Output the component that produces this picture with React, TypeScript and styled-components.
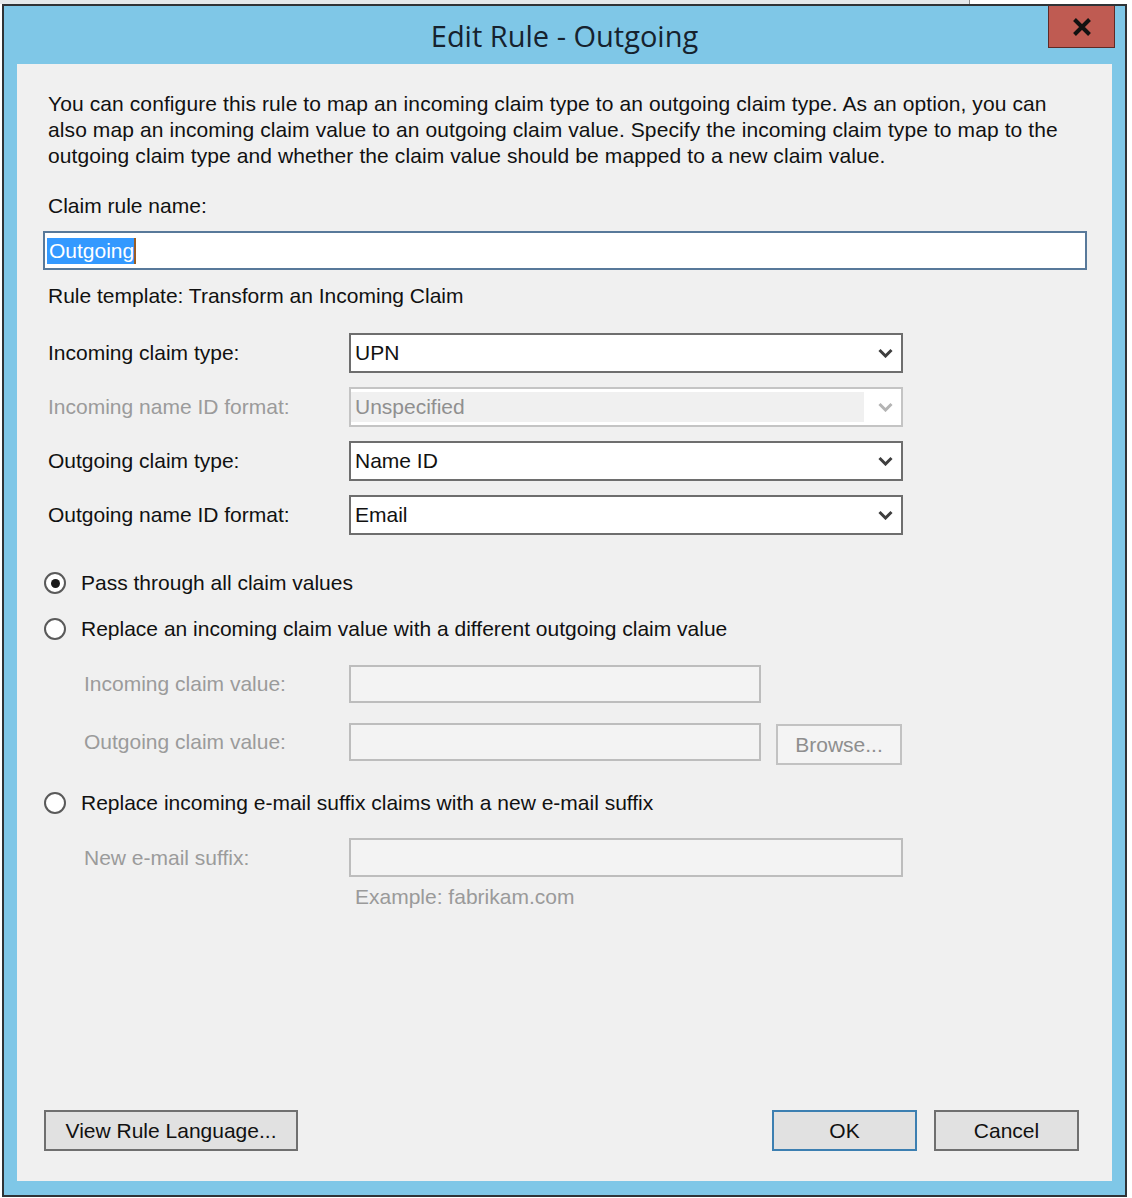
import React from "react";
import styled, { createGlobalStyle } from "styled-components";

const GlobalStyle = createGlobalStyle`
  html, body { margin: 0; padding: 0; background: #ffffff; }
  body { font-family: "Liberation Sans", Arial, sans-serif; }
  * { box-sizing: border-box; }
`;

const Page = styled.div`
  width: 1132px;
  height: 1198px;
  overflow: hidden;
  background: #ffffff;
`;

const BackdropStrip = styled.div`
  width: 970px;
  height: 4px;
  background: #e4e8ea;
  border-right: 1px solid #8a8a8a;
`;

const Window = styled.div`
  margin-left: 2px;
  width: 1125px;
  height: 1193px;
  border: 2px solid #2f3336;
  background: #7fc7e7;
  display: flex;
  flex-direction: column;
`;

const TitleBar = styled.div`
  height: 58px;
  flex: none;
  display: grid;
  grid-template-columns: 1fr auto 1fr;
`;

const Title = styled.div`
  grid-column: 2;
  align-self: center;
  font-family: "Open Sans", "Noto Sans", sans-serif;
  font-size: 29px;
  line-height: 36px;
  color: #16222e;
  padding-top: 1px;
`;

const CloseButton = styled.div`
  grid-column: 3;
  justify-self: end;
  align-self: start;
  margin-right: 10px;
  width: 67px;
  height: 42px;
  background: #bf5b52;
  border: 1px solid #5e2a26;
  border-top: none;
  display: flex;
  align-items: center;
  justify-content: center;
`;

const Panel = styled.div`
  flex: 1;
  margin: 0 13px 14px 13px;
  background: #f0f0f0;
  padding: 27px 25px 30px 27px;
  display: flex;
  flex-direction: column;
  font-size: 21px;
  line-height: 26px;
  color: #111111;
`;

const Description = styled.div`
  margin-left: 4px;
  white-space: nowrap;
  letter-spacing: 0.1px;
`;

const Line = styled.span`
  display: block;
`;

const Label = styled.div<{ $mt: number; $muted?: boolean }>`
  margin-top: ${(p) => p.$mt}px;
  margin-left: 4px;
  white-space: nowrap;
  color: ${(p) => (p.$muted ? "#9b9b9b" : "#111111")};
`;

const NameBox = styled.div`
  margin-top: 12px;
  margin-left: -1px;
  height: 39px;
  border: 2px solid #58799a;
  background: #ffffff;
  display: flex;
  align-items: center;
  padding-left: 2px;
`;

const Selection = styled.span`
  background: #3399ff;
  color: #ffffff;
  height: 26px;
  line-height: 26px;
  padding: 0 0 0 2px;
`;

const Caret = styled.span`
  width: 2px;
  height: 26px;
  background: #9a5c24;
`;

const FieldGrid = styled.div<{ $mt: number; $gap: number }>`
  margin-top: ${(p) => p.$mt}px;
  display: grid;
  grid-template-columns: 305px auto;
  row-gap: ${(p) => p.$gap}px;
  justify-content: start;
`;

const GridLabel = styled.div<{ $indent: number; $muted?: boolean }>`
  padding-left: ${(p) => p.$indent}px;
  align-self: center;
  white-space: nowrap;
  color: ${(p) => (p.$muted ? "#9b9b9b" : "#111111")};
`;

const Combo = styled.div<{ $disabled?: boolean }>`
  width: 554px;
  height: 40px;
  border: 2px solid ${(p) => (p.$disabled ? "#c4c4c4" : "#6e6e6e")};
  background: #ffffff;
  display: flex;
  align-items: center;
`;

const ComboValue = styled.div<{ $disabled?: boolean }>`
  flex: 1;
  height: 30px;
  line-height: 30px;
  padding-left: 4px;
  background: ${(p) => (p.$disabled ? "#f0f0f0" : "transparent")};
  color: ${(p) => (p.$disabled ? "#8f8f8f" : "#111111")};
`;

const ChevronBox = styled.div`
  width: 37px;
  display: flex;
  justify-content: flex-end;
  padding-right: 8px;
`;

const RadioRow = styled.div<{ $mt: number }>`
  margin-top: ${(p) => p.$mt}px;
  height: 26px;
  display: flex;
  align-items: center;
  gap: 15px;
  white-space: nowrap;
`;

const RadioCircle = styled.span<{ $checked?: boolean }>`
  width: 22px;
  height: 22px;
  border-radius: 50%;
  border: 2px solid #5a5a5a;
  background: #ffffff;
  display: flex;
  align-items: center;
  justify-content: center;
  &::after {
    content: "";
    width: 9px;
    height: 9px;
    border-radius: 50%;
    background: ${(p) => (p.$checked ? "#1a1a1a" : "transparent")};
  }
`;

const DisabledBox = styled.div<{ $w: number; $h: number }>`
  width: ${(p) => p.$w}px;
  height: ${(p) => p.$h}px;
  border: 2px solid #bdbdbd;
  background: #f3f3f3;
`;

const FieldWithButton = styled.div`
  display: flex;
  align-items: flex-start;
  gap: 15px;
  height: 42px;
`;

const SubLabel = styled(GridLabel)`
  align-self: start;
  padding-top: 6px;
`;

const Hint = styled.div`
  margin-top: 7px;
  padding-left: 311px;
  color: #9a9a9a;
  white-space: nowrap;
`;

const Spacer = styled.div`
  flex: 1;
`;

const ButtonRow = styled.div`
  display: flex;
  align-items: center;
  padding-right: 8px;
`;

const Button = styled.button<{ $w: number; $default?: boolean; $disabled?: boolean }>`
  width: ${(p) => p.$w}px;
  height: 41px;
  margin: 0;
  padding: 0;
  border: 2px solid
    ${(p) => (p.$default ? "#3c7fb1" : p.$disabled ? "#c2c2c2" : "#6f6f6f")};
  background: ${(p) => (p.$disabled ? "#f4f4f4" : "#e1e1e1")};
  color: ${(p) => (p.$disabled ? "#8e8e8e" : "#111111")};
  font-family: "Liberation Sans", Arial, sans-serif;
  font-size: 21px;
  line-height: 26px;
  cursor: default;
`;

const BrowseButton = styled(Button)`
  margin-top: 1px;
`;

const RightButtons = styled.div`
  margin-left: auto;
  display: flex;
  gap: 17px;
`;

const Chevron: React.FC<{ muted?: boolean }> = ({ muted }) => (
  <svg width="15" height="10" viewBox="0 0 15 10">
    <polyline
      points="1.5,2 7.5,8 13.5,2"
      fill="none"
      stroke={muted ? "#b4b4b4" : "#3e3e3e"}
      strokeWidth="3"
    />
  </svg>
);

const CloseGlyph = () => (
  <svg width="20" height="18" viewBox="0 0 20 18">
    <path d="M2.5 1.5 L17.5 16.5 M17.5 1.5 L2.5 16.5" stroke="#111" strokeWidth="4" strokeLinecap="butt" />
  </svg>
);

const comboRows = [
  { label: "Incoming claim type:", value: "UPN", disabled: false },
  { label: "Incoming name ID format:", value: "Unspecified", disabled: true },
  { label: "Outgoing claim type:", value: "Name ID", disabled: false },
  { label: "Outgoing name ID format:", value: "Email", disabled: false },
];

export default function App() {
  return (
    <Page>
      <GlobalStyle />
      <BackdropStrip />
      <Window>
        <TitleBar>
          <Title>Edit Rule - Outgoing</Title>
          <CloseButton>
            <CloseGlyph />
          </CloseButton>
        </TitleBar>
        <Panel>
          <Description>
            <Line>
              You can configure this rule to map an incoming claim type to an outgoing claim type. As an option, you can
            </Line>
            <Line>
              also map an incoming claim value to an outgoing claim value. Specify the incoming claim type to map to the
            </Line>
            <Line>
              outgoing claim type and whether the claim value should be mapped to a new claim value.
            </Line>
          </Description>

          <Label $mt={24}>Claim rule name:</Label>
          <NameBox>
            <Selection>Outgoing</Selection>
            <Caret />
          </NameBox>

          <Label $mt={13}>Rule template: Transform an Incoming Claim</Label>

          <FieldGrid $mt={24} $gap={14}>
            {comboRows.map((r) => (
              <React.Fragment key={r.label}>
                <GridLabel $indent={4} $muted={r.disabled}>
                  {r.label}
                </GridLabel>
                <Combo $disabled={r.disabled}>
                  <ComboValue $disabled={r.disabled}>{r.value}</ComboValue>
                  <ChevronBox>
                    <Chevron muted={r.disabled} />
                  </ChevronBox>
                </Combo>
              </React.Fragment>
            ))}
          </FieldGrid>

          <RadioRow $mt={35}>
            <RadioCircle $checked />
            Pass through all claim values
          </RadioRow>
          <RadioRow $mt={20}>
            <RadioCircle />
            Replace an incoming claim value with a different outgoing claim value
          </RadioRow>

          <FieldGrid $mt={23} $gap={20}>
            <GridLabel $indent={40} $muted>
              Incoming claim value:
            </GridLabel>
            <DisabledBox $w={412} $h={38} />
            <SubLabel $indent={40} $muted>
              Outgoing claim value:
            </SubLabel>
            <FieldWithButton>
              <DisabledBox $w={412} $h={38} />
              <BrowseButton $w={126} $disabled>
                Browse...
              </BrowseButton>
            </FieldWithButton>
          </FieldGrid>

          <RadioRow $mt={25}>
            <RadioCircle />
            Replace incoming e-mail suffix claims with a new e-mail suffix
          </RadioRow>

          <FieldGrid $mt={22} $gap={0}>
            <GridLabel $indent={40} $muted>
              New e-mail suffix:
            </GridLabel>
            <DisabledBox $w={554} $h={39} />
          </FieldGrid>
          <Hint>Example: fabrikam.com</Hint>

          <Spacer />

          <ButtonRow>
            <Button $w={254}>View Rule Language...</Button>
            <RightButtons>
              <Button $w={145} $default>
                OK
              </Button>
              <Button $w={145}>Cancel</Button>
            </RightButtons>
          </ButtonRow>
        </Panel>
      </Window>
    </Page>
  );
}
